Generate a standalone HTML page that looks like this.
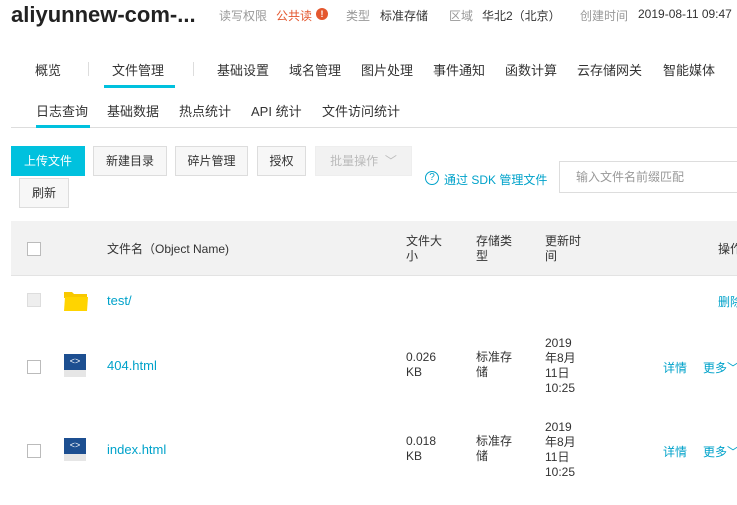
<!DOCTYPE html>
<html><head><meta charset="utf-8"><style>
*{margin:0;padding:0;box-sizing:border-box}
body{width:737px;height:505px;overflow:hidden;background:#fff;position:relative;font-family:"Liberation Sans","Noto Sans CJK SC",sans-serif;color:#333;font-size:12px}
.a{position:absolute;white-space:nowrap}
.g{color:#999}
.nav{font-size:13px;color:#333}
.btn{position:absolute;border:1px solid #ddd;background:#f7f7f7;height:30px;line-height:28px;text-align:center;font-size:12px;color:#333}
.cb{position:absolute;width:14px;height:14px;border:1px solid #bbb;background:#fff}
.link{color:#00a2ca}
.ic{position:absolute;width:22px;height:23px}
</style></head><body>
<div class="a" style="left:11px;top:2px;font-size:22px;font-weight:bold;color:#222">aliyunnew-com-...</div>
<div class="a g" style="left:219px;top:7px">读写权限</div>
<div class="a" style="left:276px;top:7px;color:#e4572e">公共读</div>
<div class="a" style="left:316px;top:8px;width:12px;height:12px;border-radius:6px;background:#e4572e;color:#fff;font-size:9px;text-align:center;line-height:12px;font-weight:bold">!</div>
<div class="a g" style="left:346px;top:7px">类型</div>
<div class="a" style="left:380px;top:7px">标准存储</div>
<div class="a g" style="left:449px;top:7px">区域</div>
<div class="a" style="left:482px;top:7px">华北2（北京）</div>
<div class="a g" style="left:580px;top:7px">创建时间</div>
<div class="a" style="left:638px;top:7px">2019-08-11 09:47</div>

<div class="a nav" style="left:35px;top:60px">概览</div>
<div class="a" style="left:88px;top:62px;width:1px;height:14px;background:#ddd"></div>
<div class="a nav" style="left:112px;top:60px">文件管理</div>
<div class="a" style="left:104px;top:85px;width:71px;height:3px;background:#00c1de"></div>
<div class="a" style="left:193px;top:62px;width:1px;height:14px;background:#ddd"></div>
<div class="a nav" style="left:217px;top:60px">基础设置</div>
<div class="a nav" style="left:289px;top:60px">域名管理</div>
<div class="a nav" style="left:361px;top:60px">图片处理</div>
<div class="a nav" style="left:433px;top:60px">事件通知</div>
<div class="a nav" style="left:505px;top:60px">函数计算</div>
<div class="a nav" style="left:577px;top:60px">云存储网关</div>
<div class="a nav" style="left:663px;top:60px">智能媒体</div>

<div class="a nav" style="left:36px;top:101px">日志查询</div>
<div class="a nav" style="left:107px;top:101px">基础数据</div>
<div class="a nav" style="left:179px;top:101px">热点统计</div>
<div class="a nav" style="left:251px;top:101px">API 统计</div>
<div class="a nav" style="left:322px;top:101px">文件访问统计</div>
<div class="a" style="left:11px;top:127px;width:726px;height:1px;background:#ddd"></div>
<div class="a" style="left:36px;top:125px;width:54px;height:3px;background:#00c1de"></div>

<div class="btn" style="left:11px;top:146px;width:74px;background:#00c1de;border-color:#00c1de;color:#fff">上传文件</div>
<div class="btn" style="left:93px;top:146px;width:74px">新建目录</div>
<div class="btn" style="left:175px;top:146px;width:73px">碎片管理</div>
<div class="btn" style="left:257px;top:146px;width:49px">授权</div>
<div class="btn" style="left:315px;top:146px;width:97px;background:#f2f2f2;border-color:#eee;color:#bbb">批量操作 &nbsp;﹀</div>
<div class="btn" style="left:19px;top:178px;width:50px">刷新</div>
<div class="a" style="left:425px;top:171px;width:14px;height:14px;border:1px solid #00a2ca;border-radius:7px;color:#00a2ca;font-size:10px;text-align:center;line-height:12px">?</div>
<div class="a link" style="left:444px;top:171px;font-size:12px">通过 SDK 管理文件</div>
<div class="a" style="left:559px;top:161px;width:190px;height:32px;border:1px solid #ddd;color:#999;padding-left:16px;line-height:30px">输入文件名前缀匹配</div>

<div class="a" style="left:11px;top:221px;width:726px;height:55px;background:#f2f2f2;border-bottom:1px solid #e3e3e3"></div>
<div class="cb" style="left:27px;top:242px"></div>
<div class="a" style="left:107px;top:240px">文件名（Object Name)</div>
<div class="a" style="left:406px;top:234px;line-height:15px">文件大<br>小</div>
<div class="a" style="left:476px;top:234px;line-height:15px">存储类<br>型</div>
<div class="a" style="left:545px;top:234px;line-height:15px">更新时<br>间</div>
<div class="a" style="left:718px;top:240px">操作</div>

<div class="cb" style="left:27px;top:293px;background:#eee;border-color:#ddd"></div>
<svg class="a" style="left:63px;top:290px" width="26" height="22" viewBox="0 0 26 22"><path d="M1 2h8l2 2h13v4H1z" fill="#f8c800"/><path d="M2 7h23l-1 14H1z" fill="#ffd400"/></svg>
<div class="a link" style="left:107px;top:293px;font-size:13px">test/</div>
<div class="a link" style="left:718px;top:293px">删除</div>

<div class="cb" style="left:27px;top:360px"></div>
<div class="ic" style="left:64px;top:354px;background:#e6e6e6"><div style="height:16px;background:#1d4f91;color:#fff;font-size:9px;text-align:center;line-height:14px">&lt;&gt;</div></div>
<div class="a link" style="left:107px;top:358px;font-size:13px">404.html</div>
<div class="a" style="left:406px;top:350px;line-height:15px">0.026<br>KB</div>
<div class="a" style="left:476px;top:350px;line-height:15px">标准存<br>储</div>
<div class="a" style="left:545px;top:336px;line-height:15px">2019<br>年8月<br>11日<br>10:25</div>
<div class="a link" style="left:663px;top:359px">详情</div>
<div class="a link" style="left:703px;top:359px">更多﹀</div>

<div class="cb" style="left:27px;top:444px"></div>
<div class="ic" style="left:64px;top:438px;background:#e6e6e6"><div style="height:16px;background:#1d4f91;color:#fff;font-size:9px;text-align:center;line-height:14px">&lt;&gt;</div></div>
<div class="a link" style="left:107px;top:442px;font-size:13px">index.html</div>
<div class="a" style="left:406px;top:434px;line-height:15px">0.018<br>KB</div>
<div class="a" style="left:476px;top:434px;line-height:15px">标准存<br>储</div>
<div class="a" style="left:545px;top:420px;line-height:15px">2019<br>年8月<br>11日<br>10:25</div>
<div class="a link" style="left:663px;top:443px">详情</div>
<div class="a link" style="left:703px;top:443px">更多﹀</div>
</body></html>
